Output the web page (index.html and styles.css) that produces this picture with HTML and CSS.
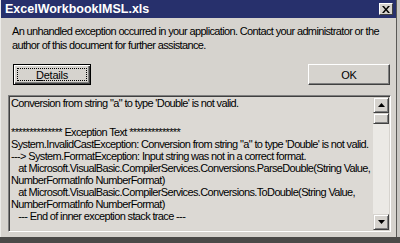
FILE: index.html
```html
<!DOCTYPE html>
<html>
<head>
<meta charset="utf-8">
<link rel="stylesheet" href="styles.css">
</head>
<body>
<div class="window">
  <div class="titlebar">
    <span class="title">ExcelWorkbookIMSL.xls</span>
    <span class="close"><svg width="8" height="7" viewBox="0 0 8 7"><path d="M0 0h2l2 2.5L6 0h2L5 3.5 8 7H6L4 4.5 2 7H0l3-3.5z" fill="#000"/></svg></span>
  </div>
  <div class="message">
    <div>An unhandled exception occurred in your application. Contact your administrator or the</div>
    <div>author of this document for further assistance.</div>
  </div>
  <div class="buttons">
    <div class="btn details"><span class="focus"><u>D</u>etails</span></div>
    <div class="btn ok">OK</div>
  </div>
  <div class="textbox">
    <div class="content">
<div class="line">Conversion from string "a" to type 'Double' is not valid.</div>
<div class="line gap">************** Exception Text **************</div>
<div class="line">System.InvalidCastException: Conversion from string "a" to type 'Double' is not valid.</div>
<div class="line">---&gt; System.FormatException: Input string was not in a correct format.</div>
<div class="line">   at Microsoft.VisualBasic.CompilerServices.Conversions.ParseDouble(String Value,</div>
<div class="line">NumberFormatInfo NumberFormat)</div>
<div class="line">   at Microsoft.VisualBasic.CompilerServices.Conversions.ToDouble(String Value,</div>
<div class="line">NumberFormatInfo NumberFormat)</div>
<div class="line">   --- End of inner exception stack trace ---</div>
    </div>
    <div class="scrollbar">
      <div class="sbtn"><svg width="7" height="4" viewBox="0 0 7 4"><path d="M3.5 0L7 4H0z" fill="#000"/></svg></div>
      <div class="thumb"></div>
      <div class="track"></div>
      <div class="sbtn"><svg width="7" height="4" viewBox="0 0 7 4"><path d="M0 0h7L3.5 4z" fill="#000"/></svg></div>
    </div>
  </div>
</div>
</body>
</html>
```
FILE: styles.css
```css
html, body {
  margin: 0;
  padding: 0;
}
body {
  width: 400px;
  height: 243px;
  overflow: hidden;
  background: linear-gradient(to bottom, #c9c7c3 0, #c9c7c3 237px, #4b4a48 237px);
  font-family: "Liberation Sans", Arial, sans-serif;
  font-size: 11px;
  color: #000;
}
.window {
  width: 397px;
  height: 237px;
  box-sizing: border-box;
  background: #d6d3ce;
  border-left: 1px solid #ecebe8;
  border-right: 1px solid #5a5956;
  display: flex;
  flex-direction: column;
}
.titlebar {
  height: 18px;
  flex: none;
  background: #27306c;
  display: flex;
  align-items: center;
  justify-content: space-between;
  padding: 0 3px 0 4px;
}
.title {
  color: #fff;
  font-weight: bold;
  font-size: 12.5px;
}
.close {
  width: 14px;
  height: 12px;
  box-sizing: border-box;
  background: #d6d3ce;
  border-top: 1px solid #fff;
  border-left: 1px solid #fff;
  border-right: 1px solid #404040;
  border-bottom: 1px solid #404040;
  display: flex;
  align-items: center;
  justify-content: center;
}
.message {
  padding: 6px 0 0 11px;
  line-height: 14px;
  letter-spacing: -0.64px;
  white-space: nowrap;
}
.buttons {
  display: flex;
  justify-content: space-between;
  margin-top: 12px;
  padding: 0 6px 0 12px;
}
.btn {
  height: 21px;
  box-sizing: border-box;
  display: flex;
  align-items: center;
  justify-content: center;
  font-size: 11px;
  letter-spacing: -0.2px;
}
.details {
  width: 78px;
  border: 1px solid #000;
  box-shadow: inset 1px 1px 0 #fff, inset -1px -1px 0 #404040, inset -2px -2px 0 #808080;
  padding: 3px;
}
.focus {
  flex: 1;
  align-self: stretch;
  border: 1px dotted #000;
  display: flex;
  align-items: center;
  justify-content: center;
}
.ok {
  width: 82px;
  border-top: 1px solid #fff;
  border-left: 1px solid #fff;
  border-right: 1px solid #404040;
  border-bottom: 1px solid #404040;
  box-shadow: inset -1px -1px 0 #808080;
}
.textbox {
  margin: 10px 0 0 7px;
  width: 383px;
  height: 137px;
  box-sizing: border-box;
  border-top: 1px solid #808080;
  border-left: 1px solid #808080;
  border-right: 1px solid #fff;
  border-bottom: 1px solid #fff;
  box-shadow: inset 1px 1px 0 #404040, inset -1px -1px 0 #d6d3ce;
  background: #dcd9d4;
  display: flex;
}
.content {
  flex: 1;
  padding: 1px 0 0 2px;
  overflow: hidden;
  letter-spacing: -0.64px;
}
.line {
  white-space: pre;
  line-height: 12px;
  height: 12px;
}
.gap {
  margin-top: 17px;
}
.scrollbar {
  width: 16px;
  margin: 1px 1px 1px 0;
  display: flex;
  flex-direction: column;
  background: #ebe9e5;
}
.sbtn, .thumb {
  height: 16px;
  box-sizing: border-box;
  background: #d6d3ce;
  border-top: 1px solid #d6d3ce;
  border-left: 1px solid #d6d3ce;
  border-right: 1px solid #404040;
  border-bottom: 1px solid #404040;
  box-shadow: inset 1px 1px 0 #fff, inset -1px -1px 0 #808080;
  display: flex;
  align-items: center;
  justify-content: center;
}
.thumb {
  height: 11px;
}
.track {
  flex: 1;
}
```
